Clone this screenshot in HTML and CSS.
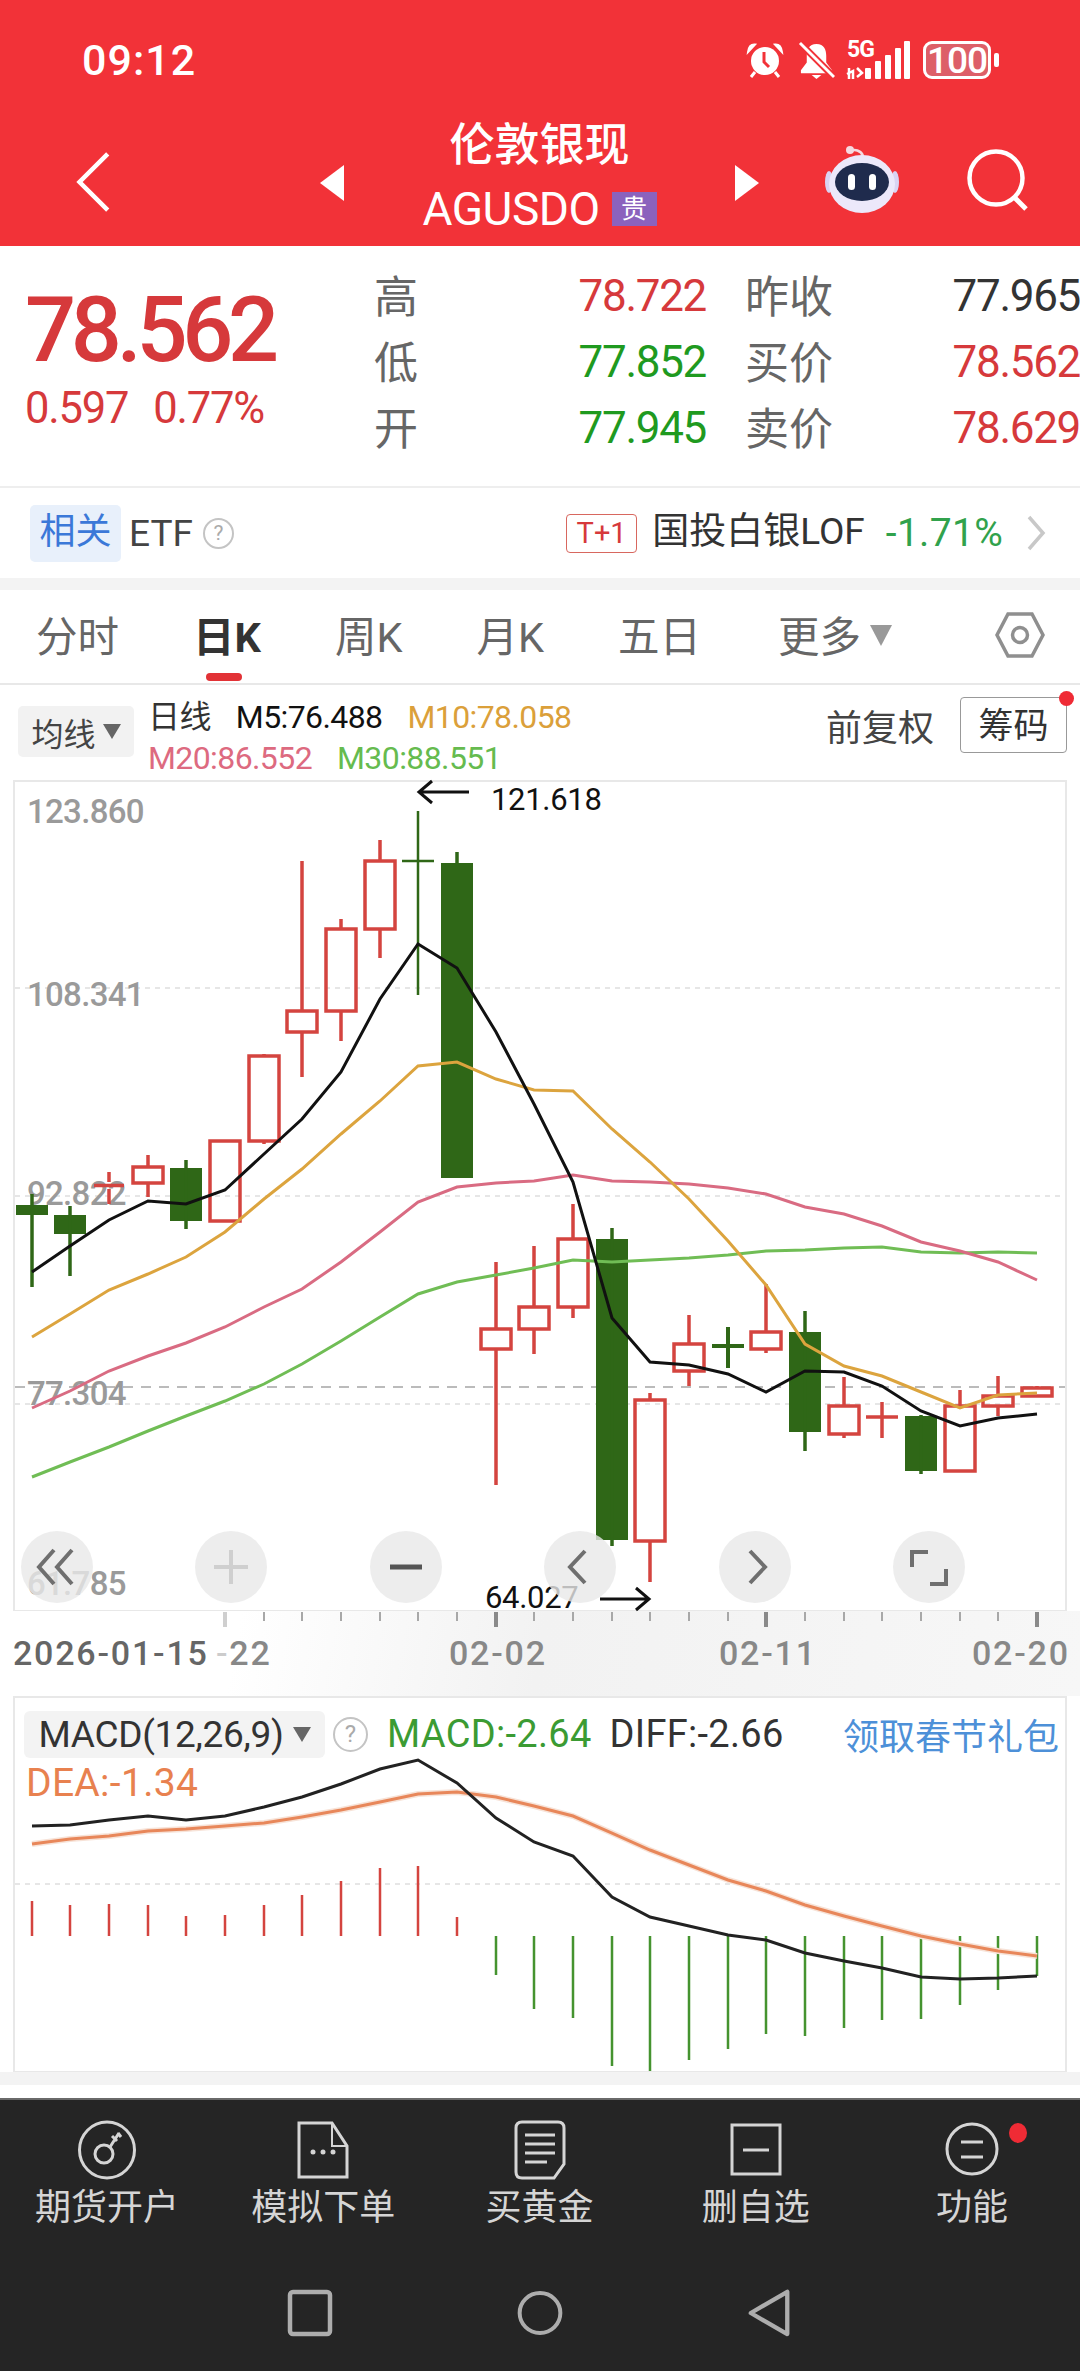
FILE: index.html
```html
<!DOCTYPE html>
<html>

<head>
    <title>伦敦银现 AGUSDO</title>
    <link rel="stylesheet" href="styles.css">
</head>

<body>
    <!-- 顶部红色区域 -->
    <header class="header">
        <div class="status-bar">
            <span class="time">09:12</span>
            <div class="status-icons">
                <svg class="st-alarm" viewBox="0 0 38 38">
                    <circle cx="19" cy="20" r="14" fill="#fff"/>
                    <path d="M2 11 9 3.500Q3 3 2 11ZM36 11 29 3.500Q35 3 36 11Z" fill="#fff" stroke="#fff" stroke-width="2"/>
                    <path d="M9 31 5 36M29 31 33 36" stroke="#fff" stroke-width="3"/>
                    <path d="M18 11V21L23 26" fill="none" stroke="#f23238" stroke-width="3"/>
                </svg>
                <svg class="st-bell" viewBox="0 0 38 40">
                    <path d="M19 3C11 3 9 9 9 15V22L3 30V33H35V30L29 22V15C29 9 27 3 19 3Z" fill="#fff"/>
                    <path d="M14 35H24L19 39Z" fill="#fff"/>
                    <path d="M2 2 37 37" stroke="#f23238" stroke-width="7"/>
                    <path d="M2 2 37 37" stroke="#fff" stroke-width="3"/>
                </svg>
                <div class="st-net">
                    <span class="st-5g">5G</span>
                    <svg class="st-bars" viewBox="0 0 64 38">
                        <path d="M3 27V38M7 38V30L1 33M11 27 16 32 11 36" fill="none" stroke="#fff" stroke-width="2.500"/>
                        <rect x="19" y="27" width="6" height="11" rx="1" fill="#fff"/>
                        <rect x="29" y="20" width="6" height="18" rx="1" fill="#fff"/>
                        <rect x="39" y="14" width="6" height="24" rx="1" fill="#fff"/>
                        <rect x="49" y="7" width="6" height="31" rx="1" fill="#fff"/>
                        <rect x="58" y="0" width="6" height="38" rx="1" fill="#fff"/>
                    </svg>
                </div>
                <div class="battery">
                    <span class="battery-level">100</span>
                </div>
                <span class="battery-tip"></span>
            </div>
        </div>
        <nav class="nav">
            <svg class="nav-back" viewBox="0 0 44 72">
                <path d="M36 5 5 36 36 67" fill="none" stroke="#fff" stroke-width="5"/>
            </svg>
            <svg class="nav-tri" viewBox="0 0 24 36"><path d="M24 0V36L0 18Z" fill="#fff"/></svg>
            <div class="nav-title">
                <div class="nav-name">伦敦银现</div>
                <div class="nav-code">AGUSDO <span class="badge">贵</span></div>
            </div>
            <svg class="nav-tri" viewBox="0 0 24 36"><path d="M0 0V36L24 18Z" fill="#fff"/></svg>
            <svg class="nav-robot" viewBox="0 0 76 72">
                <path d="M27 7C30 5 37 6 39 12" fill="none" stroke="#f5d9e0" stroke-width="2.500"/>
                <circle cx="26" cy="6" r="4" fill="#f5d9e0"/>
                <ellipse cx="5" cy="38" rx="4" ry="11" fill="#d9d3f2"/>
                <ellipse cx="71" cy="38" rx="4" ry="11" fill="#d9d3f2"/>
                <ellipse cx="38" cy="40" rx="33" ry="29" fill="#ece8fa"/>
                <ellipse cx="38" cy="38" rx="27" ry="19" fill="#1f2b4d"/>
                <rect x="24" y="30" width="7" height="16" rx="3.500" fill="#fff"/>
                <rect x="45" y="30" width="7" height="16" rx="3.500" fill="#fff"/>
            </svg>
            <svg class="nav-search" viewBox="0 0 62 62">
                <circle cx="29" cy="29" r="26.500" fill="none" stroke="#fff" stroke-width="4.500"/>
                <path d="M47 48 59 60" stroke="#fff" stroke-width="5"/>
            </svg>
        </nav>
    </header>

    <!-- 行情 -->
    <section class="quote">
        <div class="quote-main">
            <div class="quote-price">78.562</div>
            <div class="quote-change"><span>0.597</span><span>0.77%</span></div>
        </div>
        <div class="quote-grid">
            <span class="q-label">高</span><span class="q-val red">78.722</span>
            <span class="q-label">昨收</span><span class="q-val dark">77.965</span>
            <span class="q-label">低</span><span class="q-val green">77.852</span>
            <span class="q-label">买价</span><span class="q-val red">78.562</span>
            <span class="q-label">开</span><span class="q-val green">77.945</span>
            <span class="q-label">卖价</span><span class="q-val red">78.629</span>
        </div>
    </section>

    <section class="etf">
        <span class="etf-tag">相关</span>
        <span class="etf-name">ETF</span>
        <span class="help">?</span>
        <span class="t1">T+1</span>
        <span class="etf-fund">国投白银LOF</span>
        <span class="etf-pct">-1.71%</span>
        <svg class="etf-arrow" viewBox="0 0 20 38"><path d="M3 3 17 19 3 35" fill="none" stroke="#c8c8c8" stroke-width="3.500"/></svg>
    </section>

    <div class="band"></div>

    <!-- K线周期 -->
    <div class="tabs">
        <span class="tab">分时</span>
        <span class="tab active">日K</span>
        <span class="tab">周K</span>
        <span class="tab">月K</span>
        <span class="tab">五日</span>
        <span class="tab tab-more">更多<i class="caret-big"></i></span>
        <svg class="tab-gear" viewBox="0 0 50 48">
            <path d="M13 3H37L48 24 37 45H13L2 24Z" fill="none" stroke="#8f8f8f" stroke-width="3.500"/>
            <circle cx="25" cy="24" r="7.500" fill="none" stroke="#8f8f8f" stroke-width="3.500"/>
        </svg>
    </div>

    <div class="legend">
        <span class="ma-btn">均线<i class="caret"></i></span>
        <div class="ma-lines">
            <div class="ma-row"><span class="ma-day">日线</span><span class="m5">M5:76.488</span><span class="m10">M10:78.058</span></div>
            <div class="ma-row"><span class="m20">M20:86.552</span><span class="m30">M30:88.551</span></div>
        </div>
        <span class="fq">前复权</span>
        <span class="chip">筹码<i class="chip-dot"></i></span>
    </div>

    <!-- 主图 -->
    <section class="chart-box">
        <svg class="kline" viewBox="15 783 1050 829">
            <path class="grid" d="M15 989H1065M15 1197H1065M15 1405H1065"/>
            <path class="last" d="M15 1388H1065"/>

            <text class="y-label" x="27" y="824">123.860</text>
            <text class="y-label" x="27" y="1007">108.341</text>
            <text class="y-label" x="27" y="1206">92.822</text>
            <text class="y-label" x="27" y="1406">77.304</text>
            <text class="y-label" x="27" y="1596">61.785</text>

            <g class="up">
                <path d="M109 1173V1183M109 1190V1205M94 1186.500H124"/>
                <rect x="133" y="1168" width="30" height="16"/><path d="M148 1156V1168M148 1184V1198"/>
                <rect x="210" y="1142" width="30" height="80"/>
                <rect x="249" y="1057" width="30" height="85"/><path d="M264 1055V1057M264 1142V1145"/>
                <rect x="287" y="1012" width="30" height="21"/><path d="M302 862V1012M302 1033V1078"/>
                <rect x="326" y="930" width="30" height="82"/><path d="M341 920V930M341 1012V1042"/>
                <rect x="365" y="862" width="30" height="68"/><path d="M380 841V862M380 930V959"/>
                <rect x="481" y="1330" width="30" height="20"/><path d="M496 1263V1330M496 1350V1486"/>
                <rect x="519" y="1308" width="30" height="22"/><path d="M534 1247V1308M534 1330V1355"/>
                <rect x="558" y="1240" width="30" height="68"/><path d="M573 1205V1240M573 1308V1319"/>
                <rect x="635" y="1401" width="30" height="141"/><path d="M650 1394V1401M650 1542V1583"/>
                <rect x="674" y="1345" width="30" height="27"/><path d="M689 1316V1345M689 1372V1387"/>
                <rect x="751" y="1333" width="30" height="17"/><path d="M766 1285V1333M766 1350V1354"/>
                <rect x="829" y="1407" width="30" height="28"/><path d="M844 1378V1407M844 1435V1439"/>
                <path d="M866 1418H898M882 1403V1439"/>
                <rect x="945" y="1407" width="30" height="65"/><path d="M960 1391V1407"/>
                <rect x="983" y="1397" width="30" height="10"/><path d="M998 1377V1397M998 1407V1417"/>
                <rect x="1022" y="1389" width="30" height="8"/><path d="M1037 1387V1389"/>
            </g>
            <g class="down">
                <rect x="16" y="1206" width="32" height="10"/><path d="M32 1195V1288"/>
                <rect x="54" y="1216" width="32" height="19"/><path d="M70 1207V1277"/>
                <rect x="170" y="1169" width="32" height="53"/><path d="M186 1161V1230"/>
                <rect x="441" y="864" width="32" height="315"/><path d="M457 853V864"/>
                <rect x="596" y="1240" width="32" height="301"/><path d="M612 1229V1547"/>
                <path class="doji" d="M712 1347H744M728 1328V1369"/>
                <rect x="789" y="1333" width="32" height="100"/><path d="M805 1312V1452"/>
                <rect x="905" y="1417" width="32" height="55"/><path d="M921 1416V1475"/>
                <path class="thin" d="M402 862H434M418 812V996"/>
            </g>

            <polyline class="ma ma30" points="32,1478 70,1463 109,1448 148,1432 186,1417 225,1402 264,1385 302,1365 341,1342 380,1318 418,1295 457,1283 496,1276 534,1269 573,1261 612,1263 650,1261 689,1259 728,1256 766,1252 805,1251 844,1249 882,1248 921,1253 960,1254 998,1253 1037,1254"/>
            <polyline class="ma ma20" points="32,1409 70,1392 109,1372 148,1357 186,1344 225,1328 264,1308 302,1290 341,1263 380,1233 418,1203 457,1188 496,1184 534,1182 573,1176 612,1182 650,1183 689,1185 728,1189 766,1195 805,1208 844,1215 882,1227 921,1243 960,1252 998,1263 1037,1281"/>
            <polyline class="ma ma10" points="32,1338 70,1315 109,1291 148,1275 186,1258 225,1233 264,1200 302,1170 341,1135 380,1102 418,1067 457,1063 496,1080 534,1091 573,1092 612,1130 650,1163 689,1200 728,1242 766,1286 805,1345 844,1367 882,1377 921,1393 960,1409 998,1396 1037,1394"/>
            <polyline class="ma ma5" points="32,1273 70,1247 109,1221 148,1202 186,1205 225,1191 264,1155 302,1120 341,1073 380,1000 418,945 457,969 496,1033 534,1105 573,1183 612,1319 650,1363 689,1366 728,1375 766,1393 805,1372 844,1373 882,1387 921,1412 960,1427 998,1419 1037,1415"/>

            <path class="note-arrow" d="M469 793H419M432 782 419 793 432 804"/>
            <text class="note" x="491" y="811">121.618</text>
            <text class="note" x="485" y="1609">64.027</text>
            <path class="note-arrow" d="M600 1600H649M636 1589 649 1600 636 1611"/>
        </svg>
        <div class="chart-tools">
            <span class="tool"><svg viewBox="0 0 72 72"><path d="M33 19 18 36 33 53M51 19 36 36 51 53" class="tool-ico"/></svg></span>
            <span class="tool"><svg viewBox="0 0 72 72"><path d="M19 36H53M36 19V53" class="tool-ico off"/></svg></span>
            <span class="tool"><svg viewBox="0 0 72 72"><path d="M20 36H52" class="tool-ico bold"/></svg></span>
            <span class="tool"><svg viewBox="0 0 72 72"><path d="M41 20 26 36 41 52" class="tool-ico"/></svg></span>
            <span class="tool"><svg viewBox="0 0 72 72"><path d="M31 20 46 36 31 52" class="tool-ico"/></svg></span>
            <span class="tool"><svg viewBox="0 0 72 72"><path d="M19 36V21H35M53 38V53H37" class="tool-ico"/></svg></span>
        </div>
    </section>

    <!-- 日期轴 -->
    <svg class="axis" viewBox="0 1613 1080 85">
        <path class="tick-major fade" d="M225 1614V1629"/>
        <path class="tick" d="M264 1614V1623M302 1614V1623M341 1614V1623M380 1614V1623M418 1614V1623M457 1614V1623M534 1614V1623M573 1614V1623M612 1614V1623M650 1614V1623M689 1614V1623M728 1614V1623M805 1614V1623M844 1614V1623M882 1614V1623M921 1614V1623M960 1614V1623M998 1614V1623"/>
        <path class="tick-major" d="M496 1614V1629M766 1614V1629M1037 1614V1629"/>
        <text class="date" x="13" y="1667">2026-01-15</text>
        <text class="date soft" x="216" y="1667"><tspan class="fade-dash">-</tspan>22</text>
        <text class="date soft" x="449" y="1667">02-02</text>
        <text class="date soft" x="719" y="1667">02-11</text>
        <text class="date soft" x="972" y="1667">02-20</text>
    </svg>

    <!-- 副图 MACD -->
    <section class="macd-box">
        <svg class="macd" viewBox="15 1700 1050 373">
            <path class="grid" d="M15 1886H1065"/>
            <g class="bar-up">
                <path d="M32 1938V1903M70 1938V1907M109 1938V1906M148 1938V1907M186 1938V1918M225 1938V1917M264 1938V1907M302 1938V1897M341 1938V1883M380 1938V1870M418 1938V1868M457 1938V1919"/>
            </g>
            <g class="bar-down">
                <path d="M496 1938V1977M534 1938V2011M573 1938V2020M612 1938V2068M650 1938V2073M689 1938V2062M728 1938V2051M766 1938V2036M805 1938V2038M844 1938V2030M882 1938V2022M921 1938V2021M960 1938V2007M998 1938V1992M1037 1938V1978"/>
            </g>
            <polyline class="ma dea-glow" points="32,1846 70,1841 109,1838 148,1833 186,1831 225,1828 264,1825 302,1819 341,1812 380,1804 418,1796 457,1794 496,1799 534,1808 573,1818 612,1835 650,1852 689,1867 728,1882 766,1893 805,1907 844,1918 882,1928 921,1938 960,1946 998,1953 1037,1958"/>
            <polyline class="ma dea" points="32,1846 70,1841 109,1838 148,1833 186,1831 225,1828 264,1825 302,1819 341,1812 380,1804 418,1796 457,1794 496,1799 534,1808 573,1818 612,1835 650,1852 689,1867 728,1882 766,1893 805,1907 844,1918 882,1928 921,1938 960,1946 998,1953 1037,1958"/>
            <polyline class="ma diff" points="32,1828 70,1827 109,1822 148,1818 186,1822 225,1818 264,1809 302,1799 341,1786 380,1771 418,1762 457,1785 496,1820 534,1844 573,1858 612,1899 650,1919 689,1928 728,1937 766,1942 805,1955 844,1963 882,1970 921,1979 960,1981 998,1980 1037,1978"/>
        </svg>
        <div class="macd-head">
            <span class="macd-btn">MACD(12,26,9)<i class="caret"></i></span>
            <span class="help big">?</span>
            <span class="macd-val">MACD:-2.64</span>
            <span class="diff-val">DIFF:-2.66</span>
            <span class="gift">领取春节礼包</span>
            <span class="dea-val">DEA:-1.34</span>
        </div>
    </section>

    <div class="band-bottom"></div>

    <!-- 底部菜单 -->
    <footer class="footer">
        <div class="menu">
            <div class="menu-item">
                <svg viewBox="0 0 60 60">
                    <ellipse cx="30" cy="30" rx="27.500" ry="28" class="ico"/>
                    <circle cx="27" cy="34" r="9" class="ico"/>
                    <path d="M33 27 42 13M35 16 40 21M44 17 41 13" class="ico"/>
                </svg>
                <span>期货开户</span>
            </div>
            <div class="menu-item">
                <svg viewBox="0 0 60 60">
                    <path d="M6 3H39L54 26V57H6Z" class="ico"/>
                    <path d="M39 3V26H54" class="ico thin"/>
                    <circle cx="20" cy="32" r="2.500" class="dot"/>
                    <circle cx="30" cy="32" r="2.500" class="dot"/>
                    <circle cx="40" cy="32" r="2.500" class="dot"/>
                </svg>
                <span>模拟下单</span>
            </div>
            <div class="menu-item">
                <svg viewBox="0 0 60 60">
                    <path d="M12 2H48Q54 2 54 8V44L44 58H12Q6 58 6 52V8Q6 2 12 2Z" class="ico"/>
                    <path d="M15 15H45M15 24H45M15 33H45M15 42H37" class="ico"/>
                </svg>
                <span>买黄金</span>
            </div>
            <div class="menu-item">
                <svg viewBox="0 0 60 60">
                    <rect x="6" y="5" width="48" height="49" class="ico"/>
                    <path d="M17 30H43" class="ico"/>
                </svg>
                <span>删自选</span>
            </div>
            <div class="menu-item">
                <svg viewBox="0 0 60 60">
                    <circle cx="30" cy="29" r="25" class="ico"/>
                    <path d="M19 22H41M19 37H41" class="ico"/>
                </svg>
                <span>功能</span>
                <i class="menu-dot"></i>
            </div>
        </div>
        <div class="sys-nav">
            <svg viewBox="0 0 46 48"><rect x="3" y="3" width="40" height="42" rx="3" class="sys"/></svg>
            <svg viewBox="0 0 52 50"><ellipse cx="26" cy="25" rx="23" ry="22.500" class="sys"/></svg>
            <svg viewBox="0 0 46 50"><path d="M41 3V47L3 25Z" class="sys"/></svg>
        </div>
    </footer>
</body>

</html>
```
FILE: styles.css
```css
* {
    box-sizing: border-box;
}

body {
    margin: 0;
    width: 1080px;
    height: 2373px;
    overflow: hidden;
    background: white;
    font-family: Roboto, "Noto Sans CJK SC", sans-serif;
    color: #333;
}

svg {
    display: block;
}

/* 顶部 */
.header {
    height: 246px;
    background: #f23238;
    color: white;
}

.status-bar {
    height: 120px;
    display: flex;
    align-items: center;
    padding: 0 81px 0 82px;
}

.time {
    font-size: 43px;
    font-weight: 500;
    letter-spacing: 1px;
    flex: 1;
}

.status-icons {
    display: flex;
    align-items: center;
}

.st-alarm {
    width: 38px;
    height: 38px;
}

.st-bell {
    width: 37px;
    height: 39px;
    margin-left: 14px;
}

.st-net {
    position: relative;
    width: 64px;
    height: 38px;
    margin-left: 11px;
}

.st-5g {
    position: absolute;
    left: 1px;
    top: -5px;
    font-size: 23px;
    font-weight: 700;
    letter-spacing: -1px;
}

.st-bars {
    width: 64px;
    height: 38px;
}

.battery {
    width: 68px;
    height: 38px;
    margin-left: 13px;
    border: 3px solid white;
    border-radius: 9px;
    background: #dd5f68;
    display: flex;
    align-items: center;
    justify-content: center;
}

.battery-level {
    font-size: 37px;
    font-weight: 500;
    letter-spacing: -1px;
}

.battery-tip {
    width: 5px;
    height: 14px;
    margin-left: 3px;
    background: white;
    border-radius: 2px;
}

.nav {
    height: 126px;
    display: flex;
    align-items: center;
    padding-left: 75px;
}

.nav-back {
    width: 40px;
    height: 66px;
    margin-top: -2px;
}

.nav-tri {
    width: 24px;
    height: 36px;
}

.nav-title {
    width: 391px;
    text-align: center;
    margin-top: -14px;
}

.nav-name {
    font-size: 45px;
    line-height: 56px;
    font-weight: 500;
}

.nav-code {
    font-size: 46px;
    line-height: 52px;
    display: flex;
    align-items: center;
    justify-content: center;
    gap: 12px;
    margin-top: 9px;
    letter-spacing: -0.500px;
}

.badge {
    width: 45px;
    height: 34px;
    background: #8b62bd;
    font-size: 26px;
    line-height: 34px;
    letter-spacing: 0;
    text-align: center;
}

.nav-back + .nav-tri {
    margin-left: 205px;
}

.nav-robot {
    width: 76px;
    height: 72px;
    margin: -6px 0 0 65px;
}

.nav-search {
    width: 62px;
    height: 62px;
    margin: -6px 0 0 67px;
}

/* 行情 */
.quote {
    height: 242px;
    display: flex;
    border-bottom: 2px solid #eee;
}

.quote-main {
    width: 374px;
    padding: 37px 0 0 25px;
    color: #d6393b;
}

.quote-price {
    font-size: 90px;
    font-weight: 500;
    line-height: 96px;
    letter-spacing: -5.300px;
}

.quote-change {
    display: flex;
    gap: 25px;
    font-size: 43.500px;
    line-height: 50px;
    letter-spacing: -1.200px;
    margin-top: 5px;
}

.quote-grid {
    display: grid;
    grid-template-columns: 120px 212px 150px 224px;
    grid-auto-rows: 66px;
    padding-top: 17px;
    margin-right: 0;
    align-items: center;
}

.q-label {
    font-size: 44px;
    line-height: 50px;
    margin-top: 3px;
    color: #666;
}

.q-label:nth-child(4n+3) {
    margin-left: 39px;
    white-space: nowrap;
}

.q-val {
    font-size: 44px;
    text-align: right;
    letter-spacing: -1.300px;
}

.red {
    color: #d6393b;
}

.green {
    color: #1f9a1f;
}

.dark {
    color: #333;
}

/* 相关ETF */
.etf {
    height: 90px;
    display: flex;
    align-items: center;
    padding: 0 34px 0 30px;
}

.etf-tag {
    width: 91px;
    height: 57px;
    background: #e8f0fb;
    border-radius: 5px;
    color: #3b78d8;
    font-size: 36px;
    line-height: 55px;
    text-align: center;
}

.etf-name {
    font-size: 37px;
    margin-left: 8px;
    color: #444;
}

.help {
    width: 31px;
    height: 31px;
    border: 2px solid #c4c4c4;
    border-radius: 50%;
    color: #aaa;
    font-size: 21px;
    line-height: 27px;
    text-align: center;
    margin-left: 10px;
}

.t1 {
    width: 71px;
    height: 39px;
    border: 1px solid #d8675f;
    border-radius: 4px;
    color: #d6393b;
    font-size: 29px;
    line-height: 37px;
    text-align: center;
    margin-left: auto;
}

.etf-fund {
    font-size: 37px;
    line-height: 44px;
    margin: -3px 0 0 15px;
    color: #333;
}

.etf-pct {
    font-size: 39px;
    letter-spacing: 0.300px;
    margin-left: 21px;
    color: #31a24c;
}

.etf-arrow {
    width: 20px;
    height: 38px;
    margin-left: 23px;
}

.band {
    height: 12px;
    background: #f3f3f3;
}

/* 周期 */
.tabs {
    height: 95px;
    display: flex;
    align-items: center;
    padding: 0 35px 6px 36px;
    border-bottom: 2px solid #e8e8e8;
    color: #666;
    font-size: 41.500px;
    position: relative;
}

.tab {
    margin-right: 74px;
}

.active {
    font-weight: 700;
    color: #333;
    position: relative;
}

.active::after {
    content: "";
    position: absolute;
    left: 13px;
    bottom: -17px;
    width: 36px;
    height: 8px;
    background: #e23236;
    border-radius: 4px;
}

.tab-more {
    margin-right: 0;
    margin-left: 3px;
    display: flex;
    align-items: center;
}

.caret-big {
    width: 0;
    height: 0;
    margin: 4px 0 0 9px;
    border-left: 11px solid transparent;
    border-right: 11px solid transparent;
    border-top: 21px solid #999;
}

.tab-gear {
    width: 50px;
    height: 48px;
    margin: 0 0 -2px auto;
}

/* 均线图例 */
.legend {
    height: 95px;
    display: flex;
    align-items: flex-start;
    padding: 12px 13px 0 18px;
}

.ma-btn {
    width: 116px;
    height: 51px;
    margin-top: 9px;
    background: #f2f2f2;
    border-radius: 5px;
    display: flex;
    align-items: center;
    justify-content: center;
    gap: 7px;
    font-size: 32px;
    color: #444;
}

.caret {
    display: inline-block;
    width: 0;
    height: 0;
    border-left: 9px solid transparent;
    border-right: 9px solid transparent;
    border-top: 15px solid #666;
}

.ma-lines {
    margin-left: 14px;
    font-size: 32px;
    letter-spacing: -0.600px;
}

.ma-row {
    display: flex;
    gap: 25px;
    height: 41px;
    line-height: 41px;
}

.ma-day {
    color: #333;
}

.m5 {
    color: #111;
}

.m10 {
    color: #dba03a;
}

.m20 {
    color: #dd6a80;
}

.m30 {
    color: #66bb4f;
}

.fq {
    margin: 2px 0 0 auto;
    font-size: 36px;
    color: #444;
}

.chip {
    width: 107px;
    height: 56px;
    margin-left: 26px;
    border: 1px solid #999;
    border-radius: 4px;
    font-size: 35px;
    line-height: 58px;
    text-align: center;
    color: #333;
    position: relative;
}

.chip-dot {
    position: absolute;
    right: -8px;
    top: -7px;
    width: 15px;
    height: 15px;
    background: #ef2b35;
    border-radius: 50%;
}

/* 主图 */
.chart-box {
    position: relative;
    width: 1054px;
    height: 831px;
    margin-left: 13px;
    border: 2px solid #e8e8e8;
    border-bottom-width: 1px;
}

.kline {
    width: 1050px;
    height: 829px;
    overflow: visible;
}

.grid {
    fill: none;
    stroke: #dedede;
    stroke-width: 1.500;
    stroke-dasharray: 5 5;
}

.last {
    fill: none;
    stroke: #a5a5a5;
    stroke-width: 1.500;
    stroke-dasharray: 10 8;
}

.y-label {
    font-size: 33px;
    font-weight: 500;
    fill: #9a9a9a;
    letter-spacing: -0.700px;
}

.up {
    fill: none;
    stroke: #d4443f;
    stroke-width: 3.500;
}

.down {
    fill: #2f6717;
    stroke: #2f6717;
    stroke-width: 0;
}

.down path {
    stroke-width: 3.500;
}

.down .thin {
    stroke-width: 2.500;
}

.down .doji {
    stroke-width: 4;
}

.ma {
    fill: none;
    stroke-width: 2.500;
}

.ma5 {
    stroke: #111;
    stroke-width: 3;
}

.ma10 {
    stroke: #dca43e;
    stroke-width: 3;
}

.ma20 {
    stroke: #d96b82;
    stroke-width: 3;
}

.ma30 {
    stroke: #70bd55;
    stroke-width: 3;
}

.note {
    font-size: 31px;
    fill: #111;
    letter-spacing: -0.300px;
}

.note-arrow {
    fill: none;
    stroke: #111;
    stroke-width: 3;
}

.chart-tools {
    position: absolute;
    left: 6px;
    bottom: 7px;
    display: flex;
    gap: 102.400px;
}

.tool {
    width: 72px;
    height: 72px;
    border-radius: 50%;
    background: rgba(232, 232, 232, 0.8);
}

.tool-ico {
    fill: none;
    stroke: #6f6f6f;
    stroke-width: 4;
}

.tool-ico.off {
    stroke: #cfcfcf;
}

.tool-ico.bold {
    stroke-width: 5;
    stroke: #555;
}

/* 日期轴 */
.axis {
    width: 1080px;
    height: 85px;
    background: linear-gradient(100deg, #fff 22%, #f2f2f2 50%, #f7f7f7 100%);
}

.tick {
    stroke: #a8a8a8;
    stroke-width: 2;
}

.tick-major {
    stroke: #8a8a8a;
    stroke-width: 4;
}

.tick-major.fade {
    stroke: #cfcfcf;
}

.date {
    font-size: 34px;
    font-weight: 500;
    fill: #666;
    letter-spacing: 1.800px;
}

.soft {
    fill: #888;
}

.fade-dash {
    fill: #ccc;
}

/* MACD */
.macd-box {
    position: relative;
    width: 1054px;
    height: 376px;
    margin-left: 13px;
    border: 2px solid #e8e8e8;
    border-bottom-width: 1px;
}

.macd {
    width: 1050px;
    height: 373px;
}

.bar-up {
    fill: none;
    stroke: #d4443f;
    stroke-width: 2.500;
}

.bar-down {
    fill: none;
    stroke: #45932f;
    stroke-width: 2.500;
}

.dea-glow {
    stroke: #f7e3d8;
    stroke-width: 6;
}

.dea {
    stroke: #e8875a;
    stroke-width: 3;
}

.diff {
    stroke: #222;
    stroke-width: 3;
}

.macd-head {
    position: absolute;
    left: 9px;
    top: 10px;
    width: 1035px;
    display: flex;
    flex-wrap: wrap;
    align-items: center;
    font-size: 38px;
    letter-spacing: 0.300px;
}

.macd-btn {
    width: 301px;
    height: 47px;
    background: #f3f3f3;
    border-radius: 6px;
    display: flex;
    align-items: center;
    justify-content: center;
    gap: 9px;
    font-size: 37px;
    letter-spacing: -0.300px;
    color: #333;
}

.help.big {
    width: 35px;
    height: 35px;
    margin-left: 8px;
    font-size: 24px;
    line-height: 31px;
}

.macd-val {
    margin-left: 19px;
    color: #3b9b33;
}

.diff-val {
    margin-left: 18px;
    color: #333;
}

.gift {
    margin-left: auto;
    font-size: 36px;
    letter-spacing: 0;
    color: #4d90d8;
}

.dea-val {
    width: 100%;
    color: #e8814f;
    font-size: 39px;
    line-height: 42px;
    margin-top: 2px;
    margin-left: 2px;
}

.band-bottom {
    height: 26px;
    background: linear-gradient(#f3f3f3 50%, white 50%);
}

/* 底部 */
.footer {
    height: 273px;
    background: #252525;
    border-top: 2px solid #6a6a6a;
    color: #d5d5d5;
}

.menu {
    height: 148px;
    display: flex;
}

.menu-item {
    position: relative;
    width: 216.500px;
    display: flex;
    flex-direction: column;
    align-items: center;
    padding-top: 20px;
    font-size: 36px;
    line-height: 44px;
}

.menu-item:first-child {
    margin-left: -1px;
}

.menu-item svg {
    width: 60px;
    height: 60px;
    margin-bottom: 6px;
}

.ico {
    fill: none;
    stroke: #d5d5d5;
    stroke-width: 3;
}

.ico.thin {
    stroke-width: 2;
}

.dot {
    fill: #d5d5d5;
}

.menu-dot {
    position: absolute;
    left: 145px;
    top: 23px;
    width: 18px;
    height: 20px;
    background: #ef2b35;
    border-radius: 50%;
}

.sys-nav {
    display: flex;
    align-items: center;
    padding: 41px 0 0 287px;
    gap: 184px;
}

.sys-nav svg {
    width: 46px;
    height: 48px;
}

.sys {
    fill: none;
    stroke: #adadad;
    stroke-width: 4.500;
    stroke-linejoin: round;
}
```
